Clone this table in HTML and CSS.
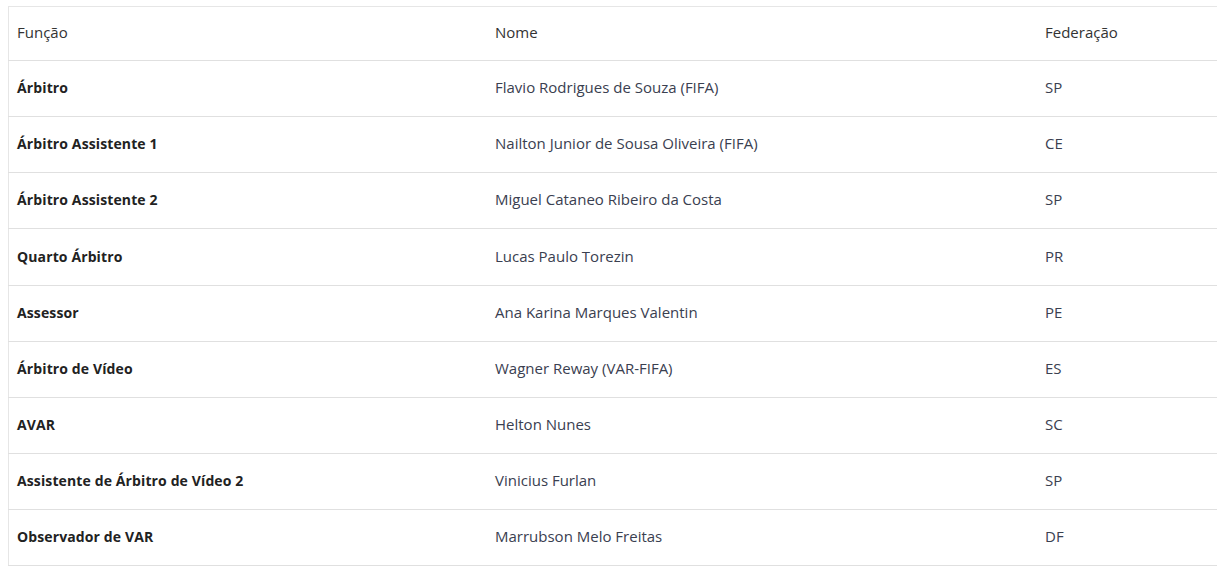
FILE: index.html
```html
<!DOCTYPE html>
<html lang="pt-BR">
<head>
<meta charset="utf-8">
<title>Arbitragem</title>
<link rel="stylesheet" href="styles.css">
</head>
<body>
<table class="refs">
  <thead>
    <tr><th class="c-func">Função</th><th class="c-nome">Nome</th><th class="c-fed">Federação</th></tr>
  </thead>
  <tbody>
    <tr><td class="role">Árbitro</td><td>Flavio Rodrigues de Souza (FIFA)</td><td>SP</td></tr>
    <tr><td class="role">Árbitro Assistente 1</td><td>Nailton Junior de Sousa Oliveira (FIFA)</td><td>CE</td></tr>
    <tr><td class="role">Árbitro Assistente 2</td><td>Miguel Cataneo Ribeiro da Costa</td><td>SP</td></tr>
    <tr><td class="role">Quarto Árbitro</td><td>Lucas Paulo Torezin</td><td>PR</td></tr>
    <tr><td class="role">Assessor</td><td>Ana Karina Marques Valentin</td><td>PE</td></tr>
    <tr><td class="role">Árbitro de Vídeo</td><td>Wagner Reway (VAR-FIFA)</td><td>ES</td></tr>
    <tr><td class="role">AVAR</td><td>Helton Nunes</td><td>SC</td></tr>
    <tr><td class="role">Assistente de Árbitro de Vídeo 2</td><td>Vinicius Furlan</td><td>SP</td></tr>
    <tr><td class="role">Observador de VAR</td><td>Marrubson Melo Freitas</td><td>DF</td></tr>
  </tbody>
</table>
</body>
</html>
```
FILE: styles.css
```css
html, body {
  background: #fff;
}
body {
  margin: 6px 8px 8px 8px;
  font-family: "Open Sans", "Liberation Sans", sans-serif;
  font-size: 15px;
  color: #333;
}
.refs {
  width: 1210px;
  border-collapse: collapse;
  border: 1px solid #e6e6e6;
  table-layout: fixed;
}
.refs th,
.refs td {
  text-align: left;
  padding: 0 8px 2px 8px;
  border-bottom: 1px solid #e0e0e0;
  line-height: 21px;
  vertical-align: middle;
}
.refs th {
  height: 51px;
  font-weight: 400;
  color: #333;
}
.refs td {
  height: 53px;
  color: #3a4050;
  font-weight: 400;
}
.refs tbody tr:nth-child(4) td {
  height: 54px;
}
.refs td.role {
  font-size: 14px;
  font-weight: 700;
  letter-spacing: 0.12px;
  color: #222;
}
.c-func { width: 462px; }
.c-nome { width: 534px; }
.c-fed { width: auto; }
```
